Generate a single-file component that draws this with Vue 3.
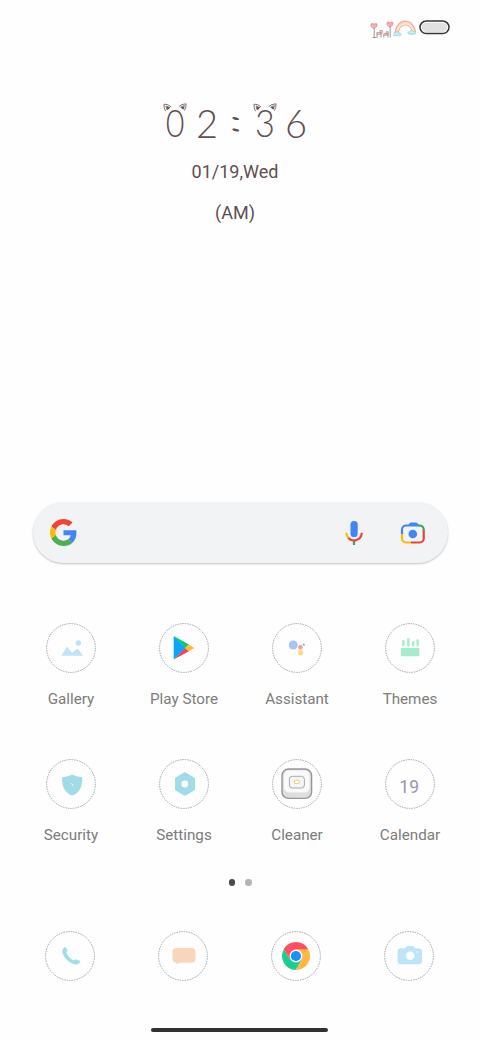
<script setup>
const apps = [
  { id: 'gallery', label: 'Gallery' },
  { id: 'play', label: 'Play Store' },
  { id: 'assistant', label: 'Assistant' },
  { id: 'themes', label: 'Themes' },
  { id: 'security', label: 'Security' },
  { id: 'settings', label: 'Settings' },
  { id: 'cleaner', label: 'Cleaner' },
  { id: 'calendar', label: 'Calendar' },
]
const dock = ['phone', 'messages', 'chrome', 'camera']
const digits = [
  { name: 'zero', char: '0', ears: true },
  { name: 'two', char: '2' },
  { name: 'colon', char: ':' },
  { name: 'three', char: '3', ears: true },
  { name: 'six', char: '6' },
]
</script>

<template>
  <main class="screen">
    <header class="status">
      <svg class="deco" width="48" height="20" viewBox="0 0 48 20" fill="none">
        <path d="M4.200 8v9.500M20.200 7v10.500M2.500 17.500h4" stroke="#8d7f80" stroke-width=".8" />
        <path d="M7 12.500V17.500M11 13v4.500M13.800 14.500v3M18 14.500v3" stroke="#a3908f" stroke-width=".9" />
        <path d="M4 9C-1.500 5 1.500 2 4 4.500 6.500 2 9.500 5 4 9ZM20 7.500c-5.500-4-2.500-7 0-4.500 2.500-2.500 5.500.5 0 4.500Z" fill="#f3b0b2" stroke="#cf8488" stroke-width=".8" />
        <path d="M7 12.500h4v2H7zM9.800 10.500h2.600v2.700H9.800zM13.800 13.500h4v1.800h-4zM16 11.700h2.500v2.600H16z" fill="#f3c6c5" stroke="#b78a8b" stroke-width=".6" />
        <path d="M25 13C27-2.500 43-2.500 45.500 12" stroke="#efaaa5" stroke-width="1.400" />
        <path d="M26.500 13.500C28-.5 42-.5 44 12" stroke="#f7e3aa" stroke-width="1.500" />
        <path d="M28 14C29.500 2 40.500 2 42.500 12.500" stroke="#efb9ac" stroke-width="1.300" />
        <path d="M25 15.700c-2.500 0-2-2.500 0-2.500.8-2.200 3.600-1.800 4 0 2.500-.4 3 2.500.5 2.500ZM39.500 14.200c-2.500 0-2-2.500 0-2.500.8-2.200 3.600-1.800 4 0 2.500-.4 3 2.500.5 2.500Z" fill="#c5edf1" stroke="#8fcfd8" stroke-width=".7" />
      </svg>
      <svg class="battery" width="31" height="15" viewBox="0 0 31 15">
        <rect x="1" y="1" width="29" height="12.600" rx="6.300" fill="#fff" stroke="#363636" stroke-width="1.500" />
        <rect x="2.700" y="2.700" width="25.600" height="9.200" rx="4.600" fill="#e1e1e1" />
      </svg>
    </header>

    <section class="clock">
      <div class="time">
        <span v-for="d in digits" :key="d.name" class="digit" :class="d.name">
          <b>{{ d.char }}</b>
          <svg v-if="d.ears" class="ears" width="24" height="10" viewBox="0 0 24 10">
            <path d="M2.600 8.200Q.6 5 1 1.200 5 .8 8.200 4M4 6.800 3 3l4 1.700M15.800 3.600Q18.500 1 23 .8q.4 3.600-1.600 6.800M17.500 4.200 21.300 2.600 20.500 6" fill="none" stroke="#756365" stroke-width=".9" />
            <path d="m3.800 3.800 3.200 1-2.600 2.400ZM17.600 4.400l3.200-1-.4 3.400Z" fill="#5b494b" />
          </svg>
        </span>
      </div>
      <div class="date">01/19,Wed</div>
      <div class="date">(AM)</div>
    </section>

    <section class="search">
      <svg class="g" width="27" height="27" viewBox="0 0 48 48">
        <path fill="#f44336" d="M24 9.500c3.500 0 6.700 1.200 9.200 3.600l6.900-6.900C35.900 2.400 30.500 0 24 0 14.600 0 6.500 5.400 2.600 13.200l8 6.200C12.400 13.700 17.700 9.500 24 9.500z" />
        <path fill="#4285f4" d="M47 24.500c0-1.600-.2-3.100-.4-4.500H24v9h12.900c-.6 3-2.300 5.500-4.800 7.200l7.700 6C44.400 38 47 32 47 24.500z" />
        <path fill="#fbbc05" d="M10.500 28.600c-.5-1.500-.8-3-.8-4.600s.3-3.100.8-4.600l-8-6.200C.9 16.500 0 20.100 0 24s.9 7.500 2.600 10.800z" />
        <path fill="#4caf50" d="M24 48c6.500 0 11.900-2.100 15.900-5.800l-7.700-6c-2.200 1.500-4.900 2.300-8.200 2.300-6.300 0-11.600-4.200-13.500-9.900l-8 6.200C6.500 42.600 14.600 48 24 48z" />
      </svg>
      <svg class="mic" width="18" height="26" viewBox="0 0 18 26" fill="none">
        <rect x="5.500" y="1" width="7.200" height="16" rx="3.600" fill="#4285f4" />
        <path d="M9 20v5" stroke="#34a853" stroke-width="2.200" />
        <path d="M1.300 12.800c0 2 .8 4.200 2.400 5.600" stroke="#fbbc04" stroke-width="2.100" />
        <path d="M3.300 18c4.200 4.800 13.400 2.200 13.400-5.200" stroke="#ea4335" stroke-width="2.100" />
      </svg>
      <svg class="lens" width="26" height="24" viewBox="0 0 26 24" fill="none" stroke-width="2.200">
        <path d="M2 13V8.500a4 4 0 0 1 4-4h13" stroke="#4285f4" />
        <path d="M8 4.500 9.600 2.300Q10.200 1.500 11 1.500h5q.8 0 1.400.8L19 4.500Z" fill="#4285f4" />
        <path d="M18.500 4.500h1.200a4 4 0 0 1 4 4V10" stroke="#34a853" />
        <path d="M23.700 9.500v8a4 4 0 0 1-4 4H11" stroke="#ea4335" />
        <path d="M2 13v4.500a4 4 0 0 0 4 4h5" stroke="#fbbc04" />
        <circle cx="12.800" cy="13" r="4.300" fill="#4285f4" />
      </svg>
    </section>

    <section class="grid">
      <div v-for="app in apps" :key="app.id" class="app">
        <svg class="icon" width="50" height="50" viewBox="0 0 50 50">
          <circle class="ring" cx="25" cy="25" r="24.400" />
          <g v-if="app.id === 'gallery'" fill="#bfe4f7">
            <path d="m15.300 32.700 5.200-8q.8-1.200 1.600 0l3.900 5.200 4.800-3.800q.8-.5 1.500.2L37 32.700Z" />
            <circle cx="32.400" cy="20" r="2.700" />
          </g>
          <g v-else-if="app.id === 'play'">
            <path fill="#00cf70" d="M14.700 13 29.900 21.600 26 25.300Z" />
            <path fill="#ff3b57" d="M14.700 36.500 29.900 28.300 26 24.700Z" />
            <path fill="#ffbd3e" d="m29.700 21.500 5 2.900q.8.500 0 1l-5 3-3.700-3.400Z" />
            <path fill="#0ba4fc" d="M14.700 13v23.500L26.300 25Z" />
          </g>
          <g v-else-if="app.id === 'assistant'">
            <circle cx="21.300" cy="22" r="4.500" fill="#a5c4fa" />
            <circle cx="28.400" cy="24.300" r="2.300" fill="#f79d96" />
            <circle cx="31.800" cy="21.700" r="1.200" fill="#8bd6a0" />
            <circle cx="28.700" cy="29.700" r="2.600" fill="#fddc7b" />
          </g>
          <g v-else-if="app.id === 'themes'" fill="#a5edc9">
            <rect x="16" y="25" width="18.400" height="8.300" rx="1" />
            <rect x="17.200" y="17" width="2.400" height="6.300" rx="1" />
            <rect x="22.200" y="15.300" width="2.400" height="8" rx="1" />
            <rect x="26.900" y="18" width="2.400" height="5.300" rx="1" />
            <rect x="31.400" y="16.300" width="2.400" height="7" rx="1" />
          </g>
          <g v-else-if="app.id === 'security'">
            <path fill="#a0dbe6" d="M26.200 15.600c3 1.700 6 2.300 9.300 2.400q.8 0 .8.800c.1 8-2 14.200-8.600 17.200q-1.500.7-3 0c-6.600-3-8.700-9.200-8.600-17.200q0-.8.800-.8c3.300-.1 6.300-.7 9.300-2.400Z" />
            <path fill="#e9f8fa" d="m24.300 24.200 1.500.2 1.600 1.200-.7 2.200-.5-2Z" />
          </g>
          <path v-else-if="app.id === 'settings'" fill="#a0dbe6" fill-rule="evenodd" d="m24.500 13.700q1.300-.8 2.600 0l7.800 4.500q1.100.7 1.100 2v9.500q0 1.300-1.100 2l-7.800 4.500q-1.300.8-2.600 0l-7.500-4.500q-1-.7-1-2v-9.500q0-1.300 1-2ZM29.200 25a3.400 3.400 0 1 0-6.800 0 3.400 3.400 0 0 0 6.800 0Z" />
          <g v-else-if="app.id === 'cleaner'">
            <rect x="10" y="10" width="29.600" height="29.400" rx="6.500" fill="#dedede" stroke="#969696" stroke-width="1.400" />
            <rect x="12" y="11.500" width="25.600" height="22" rx="5" fill="#fafafa" />
            <rect x="17.400" y="17.300" width="15" height="11.700" rx="3" fill="#f5f5f5" stroke="#aaa" />
            <rect x="22.500" y="21.200" width="4.700" height="3.300" rx="1" fill="#fff" stroke="#f2d38b" stroke-width="1.100" />
          </g>
          <text v-else x="24.300" y="33.700" text-anchor="middle" class="day">19</text>
        </svg>
        <span class="label">{{ app.label }}</span>
      </div>
    </section>

    <div class="pager"><i class="on"></i><i></i></div>

    <nav class="dock">
      <svg v-for="item in dock" :key="item" class="icon" width="50" height="50" viewBox="0 0 50 50">
        <circle class="ring" cx="25" cy="25" r="24.400" />
        <path v-if="item === 'phone'" fill="#a0dee7" d="M19.500 16.200q.8-.5 1.400.3l1.500 2.800q.4.900-.4 1.500-1 .8-.3 2 2 4 5.900 6.300 1 .6 1.800-.3.700-.8 1.700-.4l3.700 1.300q1 .5.400 1.500c-1.700 2.500-5 2.700-8 1.400-4.800-2.200-8-5.700-9.500-10-1-2.600-.3-5.200 1.800-6.400Z" />
        <path v-else-if="item === 'messages'" fill="#f8d6bb" d="M18.500 17h15a4 4 0 0 1 4 4v6.700a4 4 0 0 1-4 4H21l-1.700 1.600-1.500-1.600a4 4 0 0 1-3.300-4V21a4 4 0 0 1 4-4Z" />
        <g v-else-if="item === 'chrome'">
          <path fill="#fd5060" d="M12.780 18A14 14 0 0 1 37.120 18L24.950 25Z" />
          <path fill="#ffb744" d="M37.200 18.200A14 14 0 0 1 24.600 39L30.700 28.300 25 18.200Z" />
          <path fill="#1bcd91" d="M12.900 17.900A14 14 0 0 0 24.600 39L30.500 28.500 19 28.500Z" />
          <path fill="#fd5060" d="m12.780 18 6.300 10.500L25 25V18Z" />
          <circle cx="24.950" cy="25" r="6.400" fill="#fff" />
          <circle cx="24.950" cy="25" r="5.100" fill="#1494fa" />
        </g>
        <g v-else>
          <path fill="#bfe4f7" fill-rule="evenodd" d="M17 17.200h3.500q1 0 1.400-1 .5-1.200 1.800-1.200h5q1.300 0 1.800 1.200.4 1 1.400 1H34.500q3.500 0 3.500 3.500v9q0 3.500-3.500 3.500H17q-3.500 0-3.500-3.500v-9q0-3.500 3.500-3.500ZM30.500 24.800a4.300 4.300 0 1 0-8.600 0 4.300 4.300 0 0 0 8.600 0Z" />
          <circle cx="33.300" cy="21" r="1.100" fill="#e5f5fc" />
        </g>
      </svg>
    </nav>
    <div class="home"></div>
  </main>
</template>

<style>
body { background: #fefefe; }
</style>

<style scoped>
.screen {
  display: flex;
  flex-direction: column;
  width: 480px;
  height: 1040px;
  overflow: hidden;
  background: #fefefe;
  font-family: Roboto, "Liberation Sans", sans-serif;
}
.status {
  display: flex;
  justify-content: flex-end;
  height: 80px;
  padding: 20px 30px 0 0;
  box-sizing: border-box;
}
.deco { margin-right: 1px; }
.clock {
  display: flex;
  flex-direction: column;
  align-items: center;
  height: 422px;
  padding: 20px 10px 0 0;
  box-sizing: border-box;
  color: #5f4f50;
}
.time {
  display: flex;
  width: 148px;
  height: 51px;
  font-family: Lato, Roboto, sans-serif;
}
.digit {
  position: relative;
  display: flex;
  justify-content: center;
  width: 24px;
  font-size: 38px;
  line-height: 44px;
}
.digit b { font-weight: 300; }
.zero { margin-left: 2px; }
.zero b { transform: scaleX(.85); }
.two { margin-left: 8px; }
.two b { transform: scaleY(1.060); }
.colon { width: 14px; margin-left: 10px; }
.colon b { transform: translateY(-3px) scale(1.900, .75) skewY(28deg); }
.three { margin-left: 10px; }
.three b { transform: scaleX(.9); }
.six { margin-left: 7px; }
.six b { transform: scaleY(1.060); }
.ears { position: absolute; top: 3px; left: 0; }
.date {
  height: 41px;
  line-height: 41px;
  font-size: 18px;
}
.search {
  display: flex;
  align-items: center;
  flex: none;
  width: 415px;
  height: 61px;
  margin-left: 33px;
  padding: 0 22px 0 17px;
  box-sizing: border-box;
  border-radius: 31px;
  background: #f2f3f5;
  box-shadow: 0 1px 2px rgba(0, 0, 0, .24);
}
.mic { margin-left: auto; }
.lens { margin-left: 37px; }
.grid {
  display: grid;
  grid-template-columns: repeat(4, 113px);
  grid-auto-rows: 136px;
  margin: 60px 0 0 14.500px;
}
.app { display: flex; flex-direction: column; align-items: center; }
.icon { flex: none; display: block; }
.ring {
  fill: #fefefe;
  stroke: #a0a5a8;
  stroke-width: 1;
  stroke-dasharray: 1.500 1;
}
.label {
  margin-top: 16px;
  font-size: 15.200px;
  line-height: 20px;
  color: #7c7c7c;
}
.day { font-size: 17.500px; letter-spacing: .2px; fill: #9696ab; }
.pager {
  display: flex;
  justify-content: center;
  gap: 10px;
  height: 52px;
  margin-top: -16px;
}
.pager i { width: 6.500px; height: 6.500px; border-radius: 50%; background: #b5b5b5; }
.pager .on { background: #4a4a4a; }
.dock { display: flex; gap: 63px; padding-left: 45px; }
.home {
  flex: none;
  width: 177px;
  height: 4px;
  margin: 47px 0 0 151px;
  border-radius: 2px;
  background: #303132;
}
</style>
